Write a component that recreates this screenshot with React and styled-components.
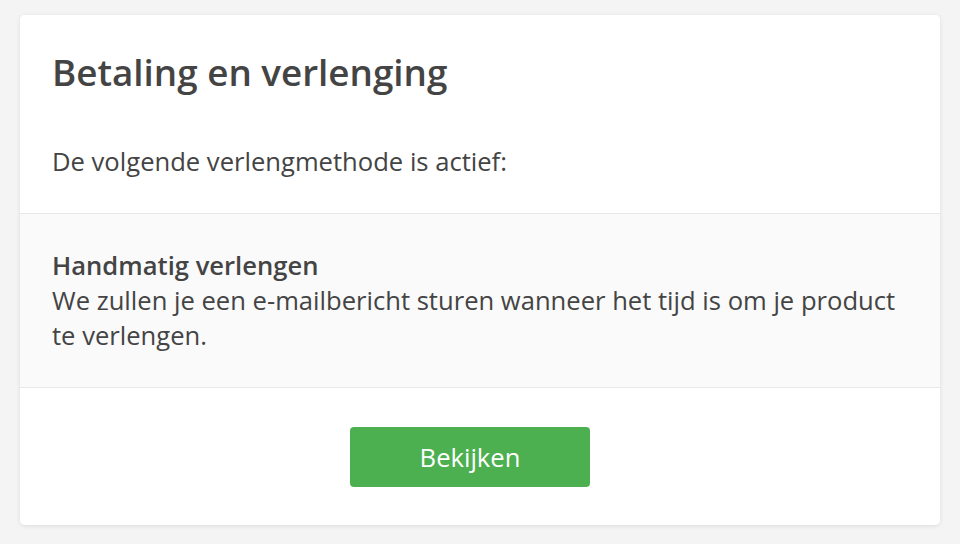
import styled, { createGlobalStyle } from "styled-components"

const Global = createGlobalStyle`
    html, body {
        margin: 0;
        padding: 0;
        background: #f4f4f4;
        font-family: "Open Sans", "Noto Sans", sans-serif;
        color: #444;
    }
`
const Page = styled.div`
    padding: 15px 20px 19px;
    box-sizing: border-box;
`
const Card = styled.div`
    background: #fff;
    border-radius: 5px;
    box-shadow: 0 1px 4px rgba(0, 0, 0, 0.1);
    overflow: hidden;
`
const Section = styled.div`
    padding: ${p => p.$padding};
    background: ${p => (p.$muted ? "#fafafa" : "#fff")};
    border-top: ${p => (p.$divided ? "1px solid #e8e8e8" : "none")};
    text-align: ${p => (p.$center ? "center" : "left")};
`
const Title = styled.h1`
    margin: 0 0 47px;
    font-size: 36.8px;
    line-height: 50px;
    font-weight: 600;
    color: #444;
`
const Text = styled.p`
    margin: 0;
    font-size: 25.6px;
    line-height: 35px;
    color: #444;
`
const Strong = styled.div`
    font-size: 25.6px;
    line-height: 35px;
    font-weight: 600;
    color: #444;
`
const Button = styled.button`
    display: inline-block;
    vertical-align: top;
    width: 240px;
    height: 60px;
    border: none;
    border-radius: 4px;
    background: #4caf50;
    color: #fff;
    font-family: "Open Sans", "Noto Sans", sans-serif;
    font-size: 25.6px;
    cursor: pointer;
`

export default function App() {
    return (
        <Page>
            <Global />
            <Card>
                <Section $padding="32px 32px 34px">
                    <Title>Betaling en verlenging</Title>
                    <Text>De volgende verlengmethode is actief:</Text>
                </Section>
                <Section $muted $divided $padding="34px 32px 34px">
                    <Strong>Handmatig verlengen</Strong>
                    <Text>We zullen je een e-mailbericht sturen wanneer het tijd is om je product te verlengen.</Text>
                </Section>
                <Section $divided $center $padding="39px 52px 38px 32px">
                    <Button>Bekijken</Button>
                </Section>
            </Card>
        </Page>
    )
}
